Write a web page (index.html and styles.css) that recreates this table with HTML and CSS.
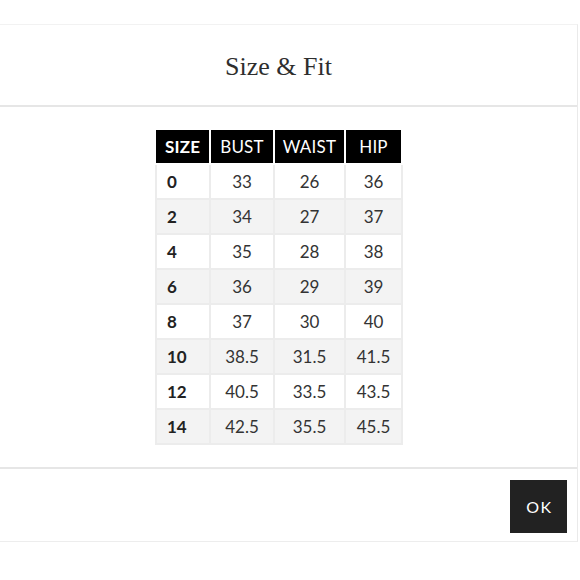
FILE: index.html
```html
<!DOCTYPE html>
<html>
<head>
<meta charset="utf-8">
<link rel="stylesheet" href="styles.css">
</head>
<body>
<div class="modal">
  <div class="modal-header"><h1 class="title">Size &amp; Fit</h1></div>
  <div class="modal-body">
    <table class="size-table">
      <thead>
        <tr><th class="c-size">SIZE</th><th class="c-bust">BUST</th><th class="c-waist">WAIST</th><th class="c-hip">HIP</th></tr>
      </thead>
      <tbody>
        <tr><td class="sz">0</td><td>33</td><td>26</td><td>36</td></tr>
        <tr class="alt"><td class="sz">2</td><td>34</td><td>27</td><td>37</td></tr>
        <tr><td class="sz">4</td><td>35</td><td>28</td><td>38</td></tr>
        <tr class="alt"><td class="sz">6</td><td>36</td><td>29</td><td>39</td></tr>
        <tr><td class="sz">8</td><td>37</td><td>30</td><td>40</td></tr>
        <tr class="alt"><td class="sz">10</td><td>38.5</td><td>31.5</td><td>41.5</td></tr>
        <tr><td class="sz">12</td><td>40.5</td><td>33.5</td><td>43.5</td></tr>
        <tr class="alt"><td class="sz">14</td><td>42.5</td><td>35.5</td><td>45.5</td></tr>
      </tbody>
    </table>
  </div>
  <div class="modal-footer"><button class="ok-btn">OK</button></div>
</div>
</body>
</html>
```
FILE: styles.css
```css
html, body {
  margin: 0;
  padding: 0;
  background: #ffffff;
}
body {
  width: 580px;
  height: 580px;
  overflow: hidden;
}
.modal {
  margin-top: 24px;
  width: 577px;
  background: #fff;
  border-top: 1px solid #f2f2f2;
  border-right: 1px solid #eaeaea;
  border-bottom: 1px solid #ededed;
}
.modal-header {
  height: 80px;
  display: flex;
  align-items: center;
  justify-content: center;
  padding-right: 20px;
  border-bottom: 2px solid #e6e6e6;
}
.title {
  margin: 0;
  padding-top: 3px;
  font-family: "Liberation Serif", "DejaVu Serif", serif;
  font-weight: 400;
  font-size: 26px;
  color: #2e2e2e;
}
.modal-body {
  padding: 23px 0 22px 155px;
  border-bottom: 2px solid #e6e6e6;
}
.size-table {
  border-collapse: collapse;
  font-family: Lato, "Open Sans", sans-serif;
  font-size: 17px;
  color: #2b2b2b;
}
.size-table th {
  background: #000;
  color: #fff;
  font-weight: 400;
  height: 33px;
  padding: 0;
  border: 2px solid #fff;
  letter-spacing: 0.2px;
}
.size-table th.c-size { font-weight: 700; }
.c-size { width: 53px; }
.c-bust { width: 62px; }
.c-waist { width: 69px; }
.c-hip { width: 55px; }
.size-table td {
  height: 33px;
  padding: 0;
  text-align: center;
  border: 2px solid #ececec;
  background: #fff;
  color: #333;
}
.size-table thead th { border-top: 0; }
.size-table thead th:first-child { border-left: 0; }
.size-table tr.alt td { background: #f3f3f3; }
.size-table td.sz {
  text-align: left;
  padding-left: 10px;
  font-weight: 700;
  color: #222;
}
.modal-footer {
  height: 72px;
  display: flex;
  justify-content: flex-end;
  align-items: flex-start;
  padding: 11px 10px 0 0;
  box-sizing: border-box;
}
.ok-btn {
  width: 57px;
  height: 53px;
  background: #222;
  color: #fff;
  border: 0;
  font-family: Lato, "Open Sans", sans-serif;
  font-size: 16px;
  letter-spacing: 1.5px;
  padding: 0 0 0 2px;
}
```
